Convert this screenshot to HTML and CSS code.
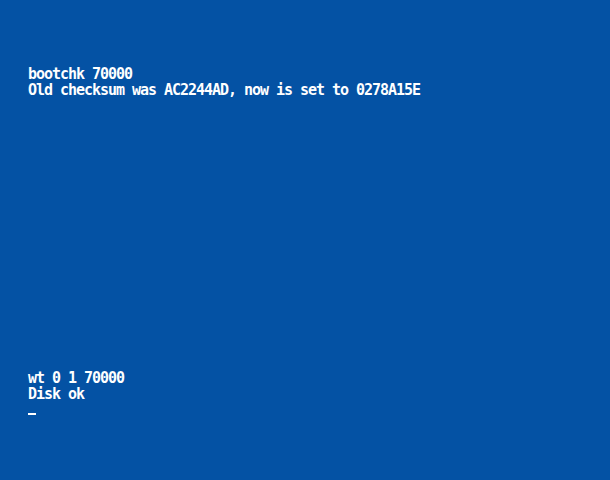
FILE: index.html
```html
<!DOCTYPE html>
<html>
<head>
<meta charset="utf-8">
<link rel="stylesheet" href="styles.css">
</head>
<body>
<div class="screen">
<pre class="term">bootchk 70000
Old checksum was AC2244AD, now is set to 0278A15E

















wt 0 1 70000
Disk ok</pre>
<div class="cursor"></div>
</div>
</body>
</html>
```
FILE: styles.css
```css
html, body {
  margin: 0;
  padding: 0;
  background: #0452a4;
  width: 610px;
  height: 480px;
  overflow: hidden;
}
.screen {
  padding: 66px 0 0 28px;
}
.term {
  margin: 0;
  font-family: "DejaVu Sans Mono", monospace;
  font-weight: bold;
  font-size: 15px;
  letter-spacing: -1.03px;
  line-height: 16px;
  color: #ffffff;
}
.cursor {
  margin-top: 11px;
  width: 8px;
  height: 2px;
  background: #ffffff;
}
```
